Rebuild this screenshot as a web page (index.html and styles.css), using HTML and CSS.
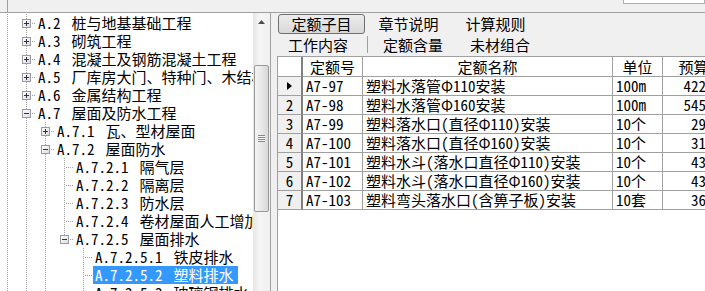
FILE: index.html
```html
<!DOCTYPE html>
<html lang="zh-CN">
<head>
<meta charset="utf-8">
<title>定额</title>
<link rel="stylesheet" href="styles.css">
</head>
<body>
<div class="app">
  <div class="topbar">
    <div class="top-left"></div>
    <div class="top-mid"></div>
    <div class="top-right"><div class="top-input"></div></div>
  </div>
  <div class="main">
    <div class="tree-panel">
      <div class="tree">
        <div class="row"><i class="g pipe"></i><i class="g tee"><b class="box plus"></b></i><span class="label"><span class="code">A.2</span>桩与地基基础工程</span></div>
        <div class="row"><i class="g pipe"></i><i class="g tee"><b class="box plus"></b></i><span class="label"><span class="code">A.3</span>砌筑工程</span></div>
        <div class="row"><i class="g pipe"></i><i class="g tee"><b class="box plus"></b></i><span class="label"><span class="code">A.4</span>混凝土及钢筋混凝土工程</span></div>
        <div class="row"><i class="g pipe"></i><i class="g tee"><b class="box plus"></b></i><span class="label"><span class="code">A.5</span>厂库房大门、特种门、木结构工程</span></div>
        <div class="row"><i class="g pipe"></i><i class="g tee"><b class="box plus"></b></i><span class="label"><span class="code">A.6</span>金属结构工程</span></div>
        <div class="row"><i class="g pipe"></i><i class="g tee"><b class="box minus"></b></i><span class="label"><span class="code">A.7</span>屋面及防水工程</span></div>
        <div class="row"><i class="g pipe"></i><i class="g pipe"></i><i class="g tee"><b class="box plus"></b></i><span class="label"><span class="code">A.7.1</span>瓦、型材屋面</span></div>
        <div class="row"><i class="g pipe"></i><i class="g pipe"></i><i class="g tee"><b class="box minus"></b></i><span class="label"><span class="code">A.7.2</span>屋面防水</span></div>
        <div class="row"><i class="g pipe"></i><i class="g pipe"></i><i class="g pipe"></i><i class="g tee"></i><span class="label"><span class="code">A.7.2.1</span>隔气层</span></div>
        <div class="row"><i class="g pipe"></i><i class="g pipe"></i><i class="g pipe"></i><i class="g tee"></i><span class="label"><span class="code">A.7.2.2</span>隔离层</span></div>
        <div class="row"><i class="g pipe"></i><i class="g pipe"></i><i class="g pipe"></i><i class="g tee"></i><span class="label"><span class="code">A.7.2.3</span>防水层</span></div>
        <div class="row"><i class="g pipe"></i><i class="g pipe"></i><i class="g pipe"></i><i class="g tee"></i><span class="label"><span class="code">A.7.2.4</span>卷材屋面人工增加</span></div>
        <div class="row"><i class="g pipe"></i><i class="g pipe"></i><i class="g pipe"></i><i class="g elbow"><b class="box minus"></b></i><span class="label"><span class="code">A.7.2.5</span>屋面排水</span></div>
        <div class="row"><i class="g pipe"></i><i class="g pipe"></i><i class="g pipe"></i><i class="g"></i><i class="g tee"></i><span class="label"><span class="code">A.7.2.5.1</span>铁皮排水</span></div>
        <div class="row"><i class="g pipe"></i><i class="g pipe"></i><i class="g pipe"></i><i class="g"></i><i class="g tee"></i><span class="label selected"><span class="code">A.7.2.5.2</span>塑料排水</span></div>
        <div class="row"><i class="g pipe"></i><i class="g pipe"></i><i class="g pipe"></i><i class="g"></i><i class="g tee"></i><span class="label"><span class="code">A.7.2.5.3</span>玻璃钢排水</span></div>
      </div>
      <div class="vscroll">
        <div class="sb-btn">
          <svg width="7" height="4" viewBox="0 0 7 4"><polygon points="3.5,0 7,4 0,4" fill="#4d4d4d"/></svg>
        </div>
        <div class="sb-track">
          <div class="sb-thumb"><span class="grip"></span></div>
        </div>
      </div>
    </div>

    <div class="right">
      <div class="tabs">
        <div class="tabrow">
          <div class="tab active">定额子目</div>
          <div class="tab">章节说明</div>
          <div class="tab">计算规则</div>
        </div>
        <div class="subrow">
          <div class="sub first">工作内容</div>
          <span class="sep"></span>
          <div class="sub">定额含量</div>
          <div class="sub last">未材组合</div>
        </div>
      </div>
      <div class="grid">
        <div class="gr head">
          <div class="c ind"></div>
          <div class="c ctr">定额号</div>
          <div class="c ctr">定额名称</div>
          <div class="c ctr">单位</div>
          <div class="c ctr">预算价</div>
        </div>
        <div class="gr">
          <div class="c ind"><svg width="5" height="8" viewBox="0 0 5 8"><polygon points="0,0 5,4 0,8" fill="#000"/></svg></div>
          <div class="c">A7-97</div>
          <div class="c">塑料水落管Φ110安装</div>
          <div class="c">100m</div>
          <div class="c num">4221.41</div>
        </div>
        <div class="gr">
          <div class="c ind">2</div>
          <div class="c">A7-98</div>
          <div class="c">塑料水落管Φ160安装</div>
          <div class="c">100m</div>
          <div class="c num">5451.30</div>
        </div>
        <div class="gr">
          <div class="c ind">3</div>
          <div class="c">A7-99</div>
          <div class="c">塑料落水口(直径Φ110)安装</div>
          <div class="c">10个</div>
          <div class="c num">293.95</div>
        </div>
        <div class="gr">
          <div class="c ind">4</div>
          <div class="c">A7-100</div>
          <div class="c">塑料落水口(直径Φ160)安装</div>
          <div class="c">10个</div>
          <div class="c num">316.68</div>
        </div>
        <div class="gr">
          <div class="c ind">5</div>
          <div class="c">A7-101</div>
          <div class="c">塑料水斗(落水口直径Φ110)安装</div>
          <div class="c">10个</div>
          <div class="c num">437.28</div>
        </div>
        <div class="gr">
          <div class="c ind">6</div>
          <div class="c">A7-102</div>
          <div class="c">塑料水斗(落水口直径Φ160)安装</div>
          <div class="c">10个</div>
          <div class="c num">437.40</div>
        </div>
        <div class="gr">
          <div class="c ind">7</div>
          <div class="c">A7-103</div>
          <div class="c">塑料弯头落水口(含箅子板)安装</div>
          <div class="c">10套</div>
          <div class="c num">366.63</div>
        </div>
      </div>
    </div>
  </div>
</div>
</body>
</html>
```

FILE: styles.css
```css
* { box-sizing: border-box; }
html, body { margin: 0; padding: 0; }
body {
  width: 705px;
  height: 291px;
  overflow: hidden;
  background: #f0f0f0;
  color: #000;
  font-family: "Noto Sans Mono CJK SC", "Noto Sans CJK SC", sans-serif;
  font-size: 15px;
  font-feature-settings: "hwid" 1;
}
.app { width: 705px; height: 291px; display: flex; flex-direction: column; }

/* top strip */
.topbar { height: 13px; display: flex; border-bottom: 1px solid #a0a0a0; flex: none; }
.top-left { width: 50px; border-left: 1px solid #a0a0a0; margin-left: 7px; }
.top-mid { width: 215px; }
.top-right { flex: 1; display: flex; justify-content: flex-end; }
.top-input { width: 82px; height: 4px; background: #fff; border: 1px solid #b0b0b0; border-top: none; }

.main { flex: 1; display: flex; min-height: 0; }

/* tree */
.tree-panel { width: 271px; flex: none; display: flex; background: #fff; border-right: 1px solid #a0a0a0; overflow: hidden; }
.tree { width: 253px; flex: none; overflow: hidden; padding-top: 1px; }
.row { display: flex; height: 18px; white-space: nowrap; }
.g { flex: none; width: 19px; height: 18px; position: relative; font-style: normal; }
.g.tee, .g.elbow { width: 17px; }
.pipe::before, .tee::before, .elbow::before {
  content: ""; position: absolute; left: 7px; top: 0; width: 1px; bottom: 0;
  background: repeating-linear-gradient(to bottom, #a0a0a0 0 1px, transparent 1px 2px);
}
.elbow::before { bottom: 9px; }
.tee::after, .elbow::after {
  content: ""; position: absolute; left: 8px; top: 9px; height: 1px; width: 9px;
  background: repeating-linear-gradient(to right, transparent 0 1px, #a0a0a0 1px 2px);
}
.box {
  position: absolute; left: 3px; top: 5px; width: 9px; height: 9px; z-index: 1;
  border: 1px solid #9a9aa6; background: linear-gradient(135deg, #ffffff, #dcdce4);
}
.box::before { content: ""; position: absolute; left: 1px; right: 1px; top: 3px; height: 1px; background: #333; }
.plus::after { content: ""; position: absolute; top: 1px; bottom: 1px; left: 3px; width: 1px; background: #333; }
.label { padding: 0 4px 0 2px; line-height: 18px; height: 18px; }
.code { margin-right: 11px; }
.label.selected { background: #3399ff; color: #fff; }

/* scrollbar */
.vscroll { width: 17px; flex: none; display: flex; flex-direction: column; background: linear-gradient(to right, #e6e6e6, #f5f5f5 40%, #f0f0f0); }
.sb-btn { height: 17px; display: flex; align-items: center; justify-content: center; }
.sb-track { flex: 1; padding-top: 35px; }
.sb-thumb {
  margin: 0 1px; height: 147px; border: 1px solid #9a9a9a; border-radius: 2px;
  background: linear-gradient(to right, #f4f4f4, #e8e8e8 50%, #d8d8d8);
  display: flex; align-items: center; justify-content: center;
}
.grip { width: 7px; height: 7px; background: repeating-linear-gradient(to bottom, #8a8a8a 0 1px, #f4f4f4 1px 2px); }

/* right side */
.right { flex: 1; display: flex; flex-direction: column; margin-left: 6px; min-width: 0; }
.tabs { height: 43px; flex: none; padding-top: 1px; }
.tabrow { display: flex; height: 20px; padding-left: 1px; }
.tab { width: 87px; height: 20px; line-height: 18px; text-align: center; border: 1px solid transparent; }
.tab.active { border-color: #707070; border-radius: 3px; background: linear-gradient(#ececec, #d9d9d9); }
.subrow { display: flex; align-items: center; height: 21px; padding-left: 11px; }
.sub { line-height: 21px; }
.sub.first { padding-right: 19px; }
.sep { width: 1px; height: 17px; background: #a0a0a0; margin-right: 15px; }
.sub.last { margin-left: 27px; }

/* grid */
.grid { flex: 1; background: #fff; border-top: 1px solid #a0a0a0; border-left: 1px solid #a0a0a0; overflow: hidden; }
.gr { display: grid; grid-template-columns: 25px 60px 250px 50px 77px; height: 19px; white-space: nowrap; }
.gr.head { height: 20px; }
.c { border-right: 1px solid #a0a0a0; border-bottom: 1px solid #a0a0a0; padding: 0 3px; line-height: 18px; overflow: hidden; }
.head .c { line-height: 19px; }
.ctr { text-align: center; }
.num { text-align: right; }
.c.ind { background: #f0f0f0; text-align: center; padding: 0; border-right: 2px solid #808080; display: flex; align-items: center; justify-content: center; }
.head .c.ind { background: #fff; }
```
